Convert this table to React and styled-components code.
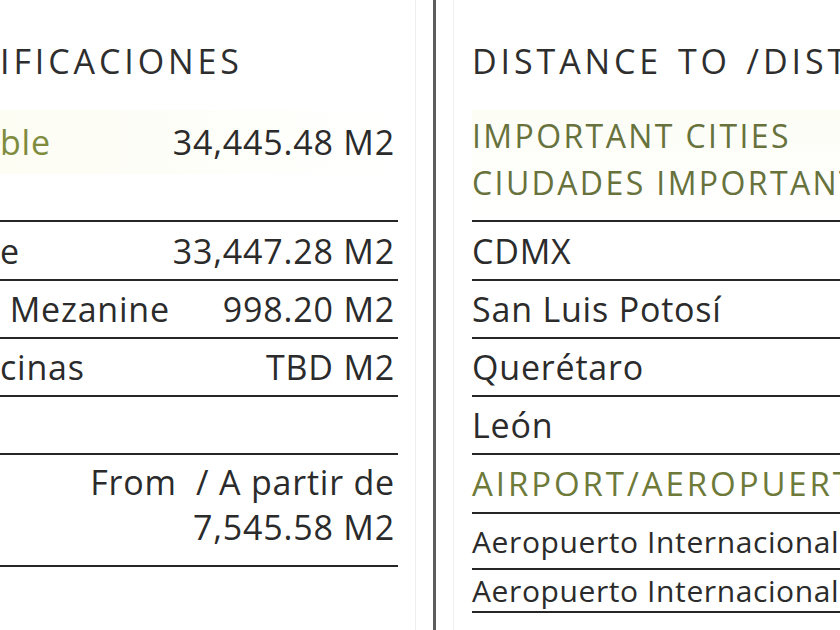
import React from "react";
import styled, { createGlobalStyle } from "styled-components";

const Global = createGlobalStyle`
  html, body { margin: 0; padding: 0; background: #ffffff; }
  body { width: 840px; height: 630px; overflow: hidden; }
  #root { width: 840px; height: 630px; }
`;

const Page = styled.div`
  display: flex;
  align-items: stretch;
  width: 840px;
  height: 630px;
  overflow: hidden;
  font-family: "Open Sans", "Noto Sans", sans-serif;
  color: #2b2b2b;
  background: #fff;
`;

const LeftPanel = styled.section`
  flex: 0 0 416px;
  box-sizing: border-box;
  padding-right: 17px;
  border-right: 1px solid #ededed;
  display: flex;
  flex-direction: column;
  overflow: hidden;
`;

const Divider = styled.div`
  flex: 0 0 3px;
  margin: 0 17px 0 17px;
  background: #5c5c5c;
`;

const RightPanel = styled.section`
  flex: 1 1 auto;
  min-width: 0;
  box-sizing: border-box;
  border-left: 1px solid #efefef;
  padding-left: 18px;
  display: flex;
  flex-direction: column;
  overflow: hidden;
`;

const Heading = styled.h2`
  margin: 0;
  box-sizing: border-box;
  height: 110px;
  padding-top: 12px;
  display: flex;
  align-items: center;
  font-size: 34px;
  font-weight: 500;
  letter-spacing: 3.9px;
  word-spacing: 3px;
  white-space: nowrap;
  color: #2e2e2e;
`;

const HighlightRow = styled.div`
  height: 64px;
  margin-bottom: 46px;
  display: flex;
  align-items: center;
  justify-content: space-between;
  padding-right: 3px;
  background: linear-gradient(90deg, #fdfdf4 0%, #fefefa 60%, #ffffff 100%);
  font-size: 34px;
  letter-spacing: 0.8px;
`;

const GroupHeader = styled.div`
  box-sizing: border-box;
  height: 110px;
  padding-top: 2px;
  line-height: 47px;
  font-size: 32px;
  font-weight: 500;
  letter-spacing: 2.4px;
  color: #67723c;
  white-space: nowrap;
  background: linear-gradient(180deg, #fdfdf6 0%, #ffffff 100%);
`;

const Row = styled.div`
  box-sizing: border-box;
  height: ${(p) => p.$h}px;
  border-top: 2px solid #262626;
  border-bottom: ${(p) => (p.$last ? "2px solid #262626" : "none")};
  display: flex;
  align-items: ${(p) => (p.$stack ? "flex-start" : "center")};
  justify-content: space-between;
  padding-right: 3px;
  padding-top: ${(p) => p.$pt || 0}px;
  font-size: ${(p) => p.$fs || 34}px;
  letter-spacing: ${(p) => p.$ls || 0.8}px;
  white-space: nowrap;
`;

const Label = styled.span`
  color: ${(p) => (p.$accent ? "#7f8c3e" : "#2b2b2b")};
  ${(p) => p.$caps && "letter-spacing: 2.9px; font-weight: 500; font-size: 33px; color: #6e7a3a;"}
`;

const Value = styled.span`
  text-align: right;
  line-height: ${(p) => p.$lh || "normal"};
  color: #2b2b2b;
  margin-left: auto;
`;

const leftRows = [
  { h: 59, label: "e", value: "33,447.28 M2" },
  { h: 58, label: "\u00A0Mezanine", value: "998.20 M2" },
  { h: 58, label: "cinas", value: "TBD M2" },
  { h: 58, label: "", value: "" },
];

const cityRows = [
  { h: 59, label: "CDMX" },
  { h: 58, label: "San Luis Potosí" },
  { h: 58, label: "Querétaro" },
  { h: 58, label: "León" },
  { h: 59, label: "AIRPORT/AEROPUERTO", accent: true },
  { h: 56, label: "Aeropuerto Internacional de la Ciudad de México", fs: 30, ls: 0.6 },
  { h: 45, label: "Aeropuerto Internacional del Bajío", fs: 30, ls: 0.6, last: true },
];

export default function App() {
  return (
    <>
      <Global />
      <Page>
        <LeftPanel>
          <Heading>IFICACIONES</Heading>
          <HighlightRow>
            <Label $accent>ble</Label>
            <Value>34,445.48 M2</Value>
          </HighlightRow>
          {leftRows.map((r, i) => (
            <Row key={i} $h={r.h}>
              <Label>{r.label}</Label>
              <Value>{r.value}</Value>
            </Row>
          ))}
          <Row $h={114} $stack $pt={5} $last>
            <span />
            <Value $lh="45px">
              From&nbsp; / A partir de
              <br />
              7,545.58 M2
            </Value>
          </Row>
        </LeftPanel>
        <Divider />
        <RightPanel>
          <Heading>DISTANCE TO /DISTANCIA A</Heading>
          <GroupHeader>
            IMPORTANT CITIES
            <br />
            CIUDADES IMPORTANTES
          </GroupHeader>
          {cityRows.map((r, i) => (
            <Row key={i} $h={r.h} $fs={r.fs} $ls={r.ls} $last={r.last}>
              <Label $accent={r.accent} $caps={r.accent}>
                {r.label}
              </Label>
            </Row>
          ))}
        </RightPanel>
      </Page>
    </>
  );
}
